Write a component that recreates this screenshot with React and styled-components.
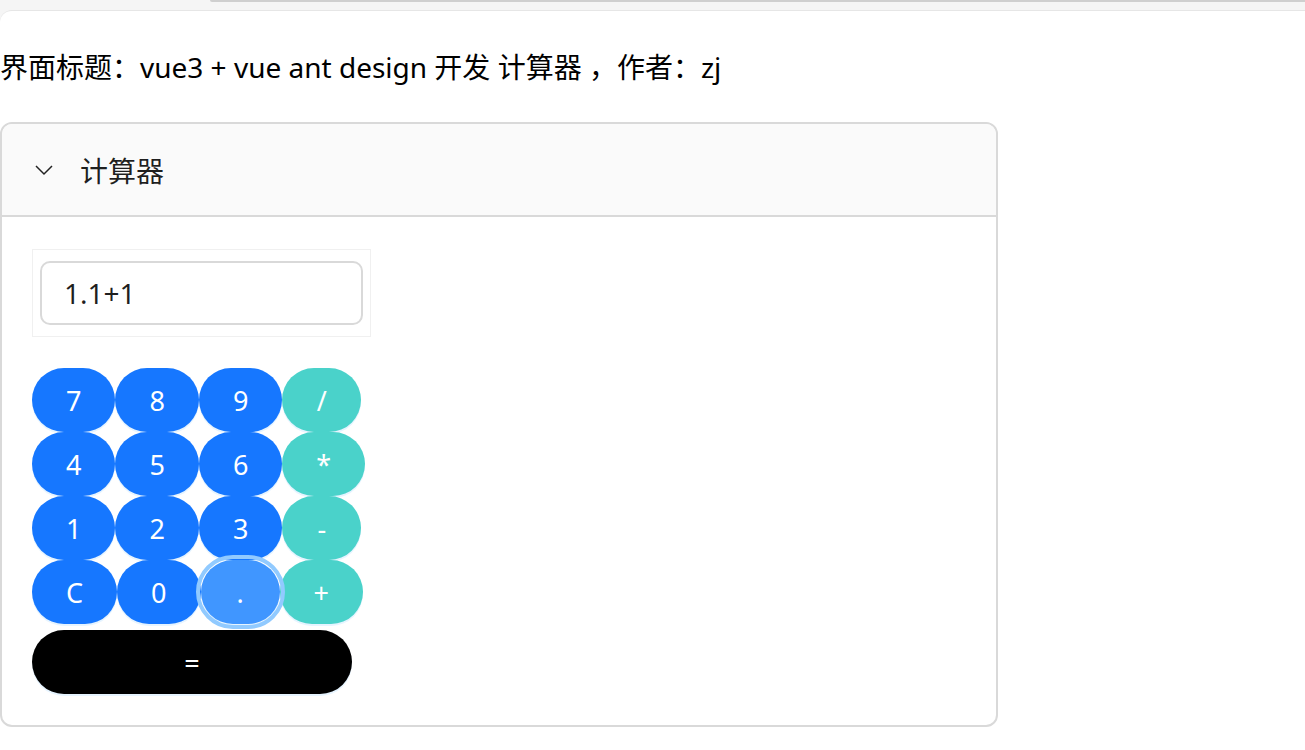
import React from 'react'
import styled, { createGlobalStyle } from 'styled-components'

const GlobalStyle = createGlobalStyle`
  html, body {
    margin: 0;
    padding: 0;
    background: #f5f5f5;
    font-family: "Noto Sans", "Noto Sans CJK SC", sans-serif;
    color: rgba(0, 0, 0, 0.88);
  }
`

const Page = styled.div`
  display: flex;
  flex-direction: column;
  min-height: 750px;
`

const TopStrip = styled.div`
  height: 10px;
  padding-left: 210px;
  display: flex;
`

const TabBar = styled.div`
  flex: 1;
  height: 2px;
  background: #cfcfcf;
  border-bottom-left-radius: 4px;
`

const Content = styled.main`
  flex: 1;
  background: #fff;
  border-top: 1px solid #e6e6e6;
  border-top-left-radius: 12px;
  padding-top: 37px;
`

const Title = styled.div`
  font-size: 28px;
  line-height: 38px;
  margin-bottom: 36px;
  color: #000;
`

const Panel = styled.section`
  width: 998px;
  box-sizing: border-box;
  border: 2px solid #d9d9d9;
  border-radius: 12px;
  overflow: hidden;
`

const PanelHeader = styled.div`
  display: flex;
  align-items: center;
  gap: 26px;
  height: 91px;
  padding-left: 32px;
  background: #fafafa;
  border-bottom: 2px solid #d9d9d9;
  font-size: 28px;
`

const PanelBody = styled.div`
  padding: 32px 30px 31px;
`

const DisplayBox = styled.div`
  width: 339px;
  box-sizing: border-box;
  padding: 11px 7px;
  border: 1px solid #f0f0f0;
`

const Display = styled.input`
  display: block;
  width: 100%;
  height: 64px;
  box-sizing: border-box;
  border: 2px solid #d9d9d9;
  border-radius: 10px;
  padding: 0 22px;
  font: inherit;
  font-size: 28px;
  color: rgba(0, 0, 0, 0.88);
  outline: none;
`

const Keypad = styled.div`
  margin-top: 31px;
  display: flex;
  flex-direction: column;
`

const KeyRow = styled.div`
  display: flex;
  margin-top: ${({ $gap }) => ($gap ? '6px' : '0')};
`

const colors = {
  num: '#1677ff',
  op: '#4ad2ca',
  focus: '#4096ff',
  eq: '#000'
}

const Key = styled.button`
  height: 64px;
  min-width: 79px;
  padding: 0 ${({ $wide }) => ($wide ? '0' : '34px')};
  width: ${({ $wide }) => ($wide ? '320px' : 'auto')};
  border: none;
  border-radius: 32px;
  background: ${({ $kind }) => colors[$kind]};
  color: #fff;
  font-family: inherit;
  font-size: 27px;
  cursor: pointer;
  box-shadow: 0 2px 0 rgba(5, 145, 255, 0.1);
  outline: ${({ $kind }) => ($kind === 'focus' ? '4px solid #91caff' : 'none')};
  outline-offset: 1px;
  position: relative;
  z-index: ${({ $kind }) => ($kind === 'focus' ? 1 : 0)};
`

const Chevron = () => (
  <svg width="20" height="20" viewBox="0 0 20 20" fill="none">
    <path d="M2 6l8 8 8-8" stroke="#222" strokeWidth="1.5" />
  </svg>
)

const rows = [
  [['7', 'num'], ['8', 'num'], ['9', 'num'], ['/', 'op']],
  [['4', 'num'], ['5', 'num'], ['6', 'num'], ['*', 'op']],
  [['1', 'num'], ['2', 'num'], ['3', 'num'], ['-', 'op']],
  [['C', 'num'], ['0', 'num'], ['.', 'focus'], ['+', 'op']]
]

export default function App() {
  return (
    <Page>
      <GlobalStyle />
      <TopStrip>
        <TabBar />
      </TopStrip>
      <Content>
        <Title>界面标题：vue3 + vue ant design 开发 计算器 ，作者：zj</Title>
        <Panel>
          <PanelHeader>
            <Chevron />
            计算器
          </PanelHeader>
          <PanelBody>
            <DisplayBox>
              <Display defaultValue="1.1+1" />
            </DisplayBox>
            <Keypad>
              {rows.map((row, i) => (
                <KeyRow key={i}>
                  {row.map(([label, kind]) => (
                    <Key key={label} $kind={kind}>
                      {label}
                    </Key>
                  ))}
                </KeyRow>
              ))}
              <KeyRow $gap>
                <Key $kind="eq" $wide>
                  =
                </Key>
              </KeyRow>
            </Keypad>
          </PanelBody>
        </Panel>
      </Content>
    </Page>
  )
}
